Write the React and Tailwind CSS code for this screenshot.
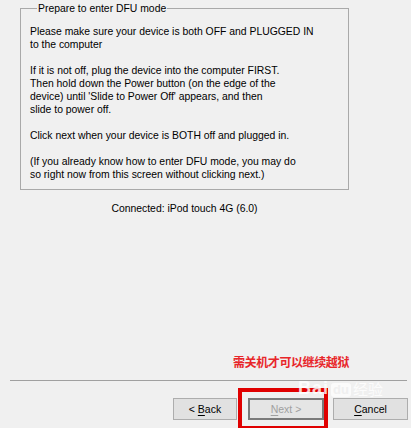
import React from "react";

function Btn({ children, className = "" }) {
  return (
    <div
      className={
        "flex h-[22px] items-center justify-center border border-[#adadad] bg-[#e1e1e1] text-[10.5px] text-black " +
        className
      }
    >
      {children}
    </div>
  );
}

export default function App() {
  return (
    <div className="relative h-[428px] w-[411px] overflow-hidden bg-[#f0f0f0] font-['Liberation_Sans',sans-serif] text-[10.4px] leading-[13px] text-black">
      <div className="flex flex-col">
        <fieldset className="ml-[20px] mt-[2px] h-[188px] w-[329px] border border-[#a9a9a9] pl-[9px] pr-[4px] pt-[10px]">
          <legend className="ml-[7px] px-[1px] leading-[13px]">Prepare to enter DFU mode</legend>
          <p>
            Please make sure your device is both OFF and PLUGGED IN
            <br />
            to the computer
          </p>
          <p className="mt-[13px]">
            If it is not off, plug the device into the computer FIRST.
            <br />
            Then hold down the Power button (on the edge of the
            <br />
            device) until 'Slide to Power Off' appears, and then
            <br />
            slide to power off.
          </p>
          <p className="mt-[13px]">Click next when your device is BOTH off and plugged in.</p>
          <p className="mt-[13px]">
            (If you already know how to enter DFU mode, you may do
            <br />
            so right now from this screen without clicking next.)
          </p>
        </fieldset>
        <div className="ml-[20px] mt-[12px] w-[329px] text-center">Connected: iPod touch 4G (6.0)</div>
        <div className="ml-[233px] mt-[140px] font-['Noto_Sans_CJK_SC',sans-serif] text-[12px] font-bold leading-[14px] tracking-[-0.4px] text-[#e8262a]">
          需关机才可以继续越狱
        </div>
        <div className="ml-[10px] mt-[11px] h-px w-[397px] bg-[#a0a0a0]" />
        <div className="mt-[17px] flex">
          <Btn className="ml-[173px] w-[64px]">
            &lt;&nbsp;<span className="underline underline-offset-2">B</span>ack
          </Btn>
          <div className="ml-[11px] flex h-[22px] w-[76px] items-center justify-center border-2 border-[#7a7a7a] bg-[#e5e5e5] text-[10.5px] text-[#a0a0a0]">
            <span className="underline underline-offset-2">N</span>ext &gt;
          </div>
          <Btn className="ml-[9px] w-[75px]">
            <span className="underline underline-offset-2">C</span>ancel
          </Btn>
        </div>
      </div>
      {/* red highlight box */}
      <div className="absolute left-[238px] top-[388px] h-[41px] w-[90px] border-[4px] border-b-[3px] border-[#e00000]" />
      {/* watermark */}
      <div className="pointer-events-none absolute left-[298px] top-[379px] flex items-end gap-[2px] font-['Liberation_Sans',sans-serif] text-white opacity-80">
        <span className="text-[18px] font-bold leading-[18px] tracking-[1px]">Bai</span>
        <span className="rounded-[3px] bg-white/90 px-[2px] text-[13px] font-bold leading-[14px] text-[#f0f0f0]">du</span>
        <span className="font-['Noto_Sans_CJK_SC',sans-serif] text-[15px] leading-[17px]">经验</span>
      </div>
    </div>
  );
}
